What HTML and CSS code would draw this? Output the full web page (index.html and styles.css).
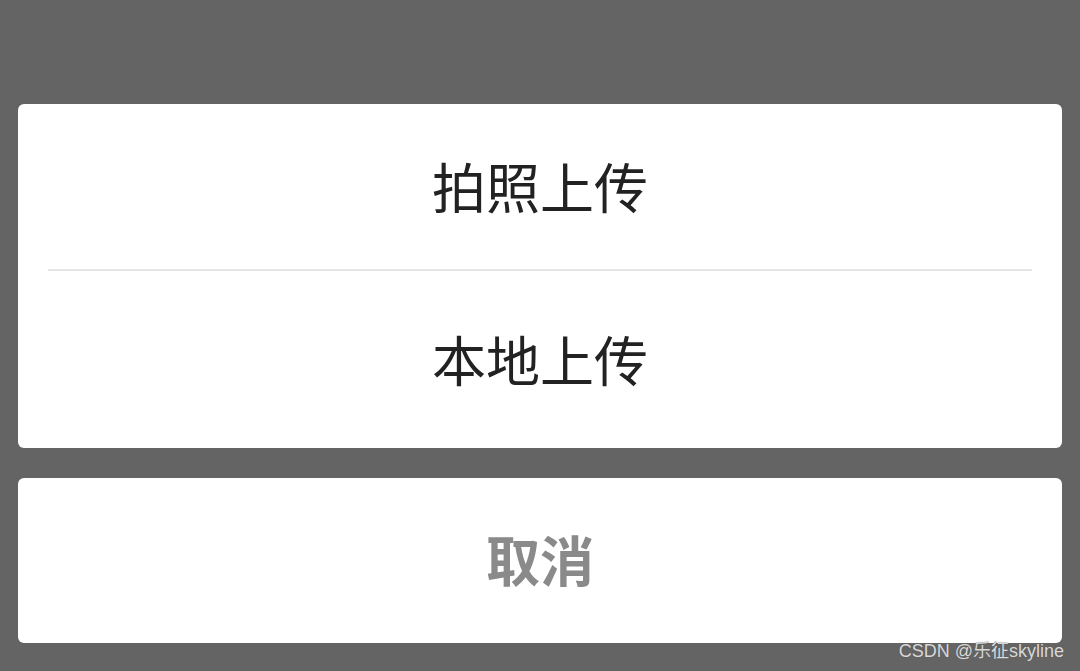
FILE: index.html
```html
<!DOCTYPE html>
<html>
<head>
<meta charset="utf-8">
<link rel="stylesheet" href="styles.css">
</head>
<body>
<div class="screen">
  <div class="sheet">
    <div class="option first">拍照上传</div>
    <div class="divider"></div>
    <div class="option second">本地上传</div>
  </div>
  <div class="sheet cancel">取消</div>
  <div class="watermark">CSDN @乐征skyline</div>
</div>
</body>
</html>
```
FILE: styles.css
```css
html, body {
  margin: 0;
  padding: 0;
  background: #646464;
}
.screen {
  position: relative;
  width: 1080px;
  height: 671px;
  padding: 104px 18px 0;
  box-sizing: border-box;
  display: flex;
  flex-direction: column;
  gap: 30px;
  font-family: "Noto Sans CJK SC", "Noto Sans", sans-serif;
}
.sheet {
  background: #fff;
  border-radius: 6px;
  display: flex;
  flex-direction: column;
}
.option {
  display: flex;
  align-items: center;
  justify-content: center;
  font-size: 54px;
  color: #222;
  padding-bottom: 2px;
  box-sizing: border-box;
}
.option.first { height: 165px; }
.option.second { height: 177px; }
.divider {
  height: 2px;
  margin: 0 30px;
  background: #e5e5e5;
}
.cancel {
  height: 165px;
  align-items: center;
  justify-content: center;
  font-size: 54px;
  font-weight: bold;
  color: #8a8a8a;
  padding-bottom: 4px;
  box-sizing: border-box;
}
.watermark {
  position: absolute;
  right: 16px;
  bottom: 9px;
  font-family: "Liberation Sans", "Noto Sans CJK SC", sans-serif;
  font-size: 18px;
  color: #d8d8d8;
  text-shadow: 0 0 1px #555;
}
```
